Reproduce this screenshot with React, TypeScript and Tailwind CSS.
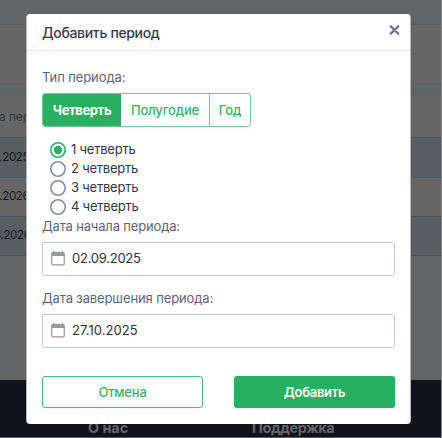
import { useState } from "react";

const quarters = ["1 четверть", "2 четверть", "3 четверть", "4 четверть"];

function PageBehind() {
  return (
    <div className="flex h-full flex-col border-r border-[#858585] bg-[#636466] text-[11.5px] tracking-[-0.35px] text-[#16181f]">
      <div className="h-[25px] shrink-0 border-b border-[#5d6063]" />
      <div className="h-[58px] shrink-0 bg-[#666666]" />
      <div className="h-[13px] shrink-0 border-y border-[#5f6366] bg-[#616466]" />
      <div className="flex h-[41px] shrink-0 items-center bg-[#666666] text-[12px] tracking-[-0.1px] text-[#33363d]">
        <span className="-ml-px">а период</span>
      </div>
      <div className="flex h-[41px] shrink-0 items-center border-y border-[#505559] bg-[#575d60]">
        <span className="-ml-[5px]">1.2025</span>
      </div>
      <div className="flex h-[38px] shrink-0 items-center bg-[#666666]">
        <span className="-ml-[5px]">1.2026</span>
      </div>
      <div className="flex h-[40px] shrink-0 items-center border-y border-[#484c54] bg-[#575d60]">
        <span className="-ml-[6px]">3.2026</span>
      </div>
      <div className="grow" />
      <div className="flex h-[58px] shrink-0 items-end border-b border-[#5a5c62] bg-[#10131d] pb-px text-[14.5px] leading-[17px] font-bold tracking-[-0.1px] text-[#666666]">
        <span className="ml-[88px] w-[164px]">О нас</span>
        <span className="tracking-[-0.4px]">Поддержка</span>
      </div>
    </div>
  );
}

function CalendarIcon() {
  return (
    <svg width="14" height="15" viewBox="0 0 14 15" className="shrink-0">
      <path d="M1 2h12v3H1z" fill="#999999" />
      <path d="M3 0v2M11 0v2" stroke="#999999" strokeWidth="1.4" />
      <rect x="0.75" y="1.75" width="12.5" height="12.2" rx="1" fill="none" stroke="#999999" strokeWidth="1.3" />
    </svg>
  );
}

function RadioMark({ checked }: { checked: boolean }) {
  return (
    <svg width="16" height="16" viewBox="0 0 16 16" className="shrink-0">
      <circle cx="8" cy="8" r="7.2" fill="none" stroke={checked ? "#29af61" : "#858da6"} strokeWidth="1.6" />
      {checked && <circle cx="8" cy="8" r="4.2" fill="#29af61" />}
    </svg>
  );
}

function DateField({ value, spacing }: { value: string; spacing: string }) {
  return (
    <div className="flex h-[34px] w-[353px] items-center gap-[7px] rounded-[3px] border border-[#b9cad6] pl-[8px] text-[13px] text-[#2b3142]">
      <CalendarIcon />
      <span className={spacing}>{value}</span>
    </div>
  );
}

export default function App() {
  const [quarter, setQuarter] = useState(0);
  return (
    <div className="relative h-[438px] w-[442px] overflow-hidden font-['Inter','Liberation_Sans',sans-serif]">
      <PageBehind />
      <div className="absolute top-[14px] left-[26px] flex h-[410px] w-[385px] flex-col rounded-[4px] border-x border-[#b5b5b5] bg-white">
        <div className="flex h-[37px] shrink-0 justify-between border-b border-[#e0e4ee] pr-[10px] pl-[15px]">
          <h1 className="pt-[9px] text-[14px] leading-[20px] font-medium tracking-[-0.34px] text-[#333a52]">Добавить период</h1>
          <button aria-label="Закрыть" className="mt-[11px] h-[10px]">
            <svg width="11" height="10" viewBox="0 0 11 10">
              <path d="M1.8 1.3l7.4 7.4M9.2 1.3L1.8 8.7" stroke="#6f7b98" strokeWidth="2.4" strokeLinecap="round" />
            </svg>
          </button>
        </div>
        <div className="flex grow flex-col px-[15px]">
          <p className="mt-[16px] text-[13px] leading-[20px] tracking-[-0.1px] text-[#5d657a]">Тип периода:</p>
          <div className="mt-[6px] flex h-[34px] w-[209px] overflow-hidden rounded-[3px] border border-[#72cb98] text-[13px] font-medium tracking-[-0.15px] text-[#36b36c]">
            <button className="w-[78px] shrink-0 bg-[#29af61] pt-px font-bold tracking-[-0.4px] text-white">Четверть</button>
            <button className="w-[89px] shrink-0 border-r border-[#72cb98] pt-px">Полугодие</button>
            <button className="grow pt-px">Год</button>
          </div>
          <div className="mt-[13px] ml-[8px] flex flex-col">
            {quarters.map((name, i) => (
              <label key={name} className="flex h-[19.2px] items-center gap-[5px] text-[13px] tracking-[-0.22px] text-[#30364a]">
                <input type="radio" name="quarter" className="sr-only" checked={quarter === i} onChange={() => setQuarter(i)} />
                <RadioMark checked={quarter === i} />
                {name}
              </label>
            ))}
          </div>
          <p className="-mt-px mb-[6px] text-[13px] leading-[20px] tracking-[-0.16px] text-[#5d657a]">Дата начала периода:</p>
          <DateField value="02.09.2025" spacing="tracking-[-0.25px]" />
          <p className="mt-[12px] mb-[6px] text-[13px] leading-[20px] tracking-[-0.12px] text-[#5d657a]">Дата завершения периода:</p>
          <DateField value="27.10.2025" spacing="tracking-[0.05px]" />
          <div className="mt-[28px] flex w-[353px] justify-between text-[13px] font-medium">
            <button className="h-[32px] w-[161px] rounded-[3px] border border-[#4cbb7b] pt-px tracking-[-0.2px] text-[#36b36c] shadow-xs">Отмена</button>
            <button className="h-[32px] w-[161px] rounded-[3px] bg-[#29af61] pt-px font-semibold tracking-[-0.3px] text-white shadow-xs">Добавить</button>
          </div>
        </div>
      </div>
    </div>
  );
}
